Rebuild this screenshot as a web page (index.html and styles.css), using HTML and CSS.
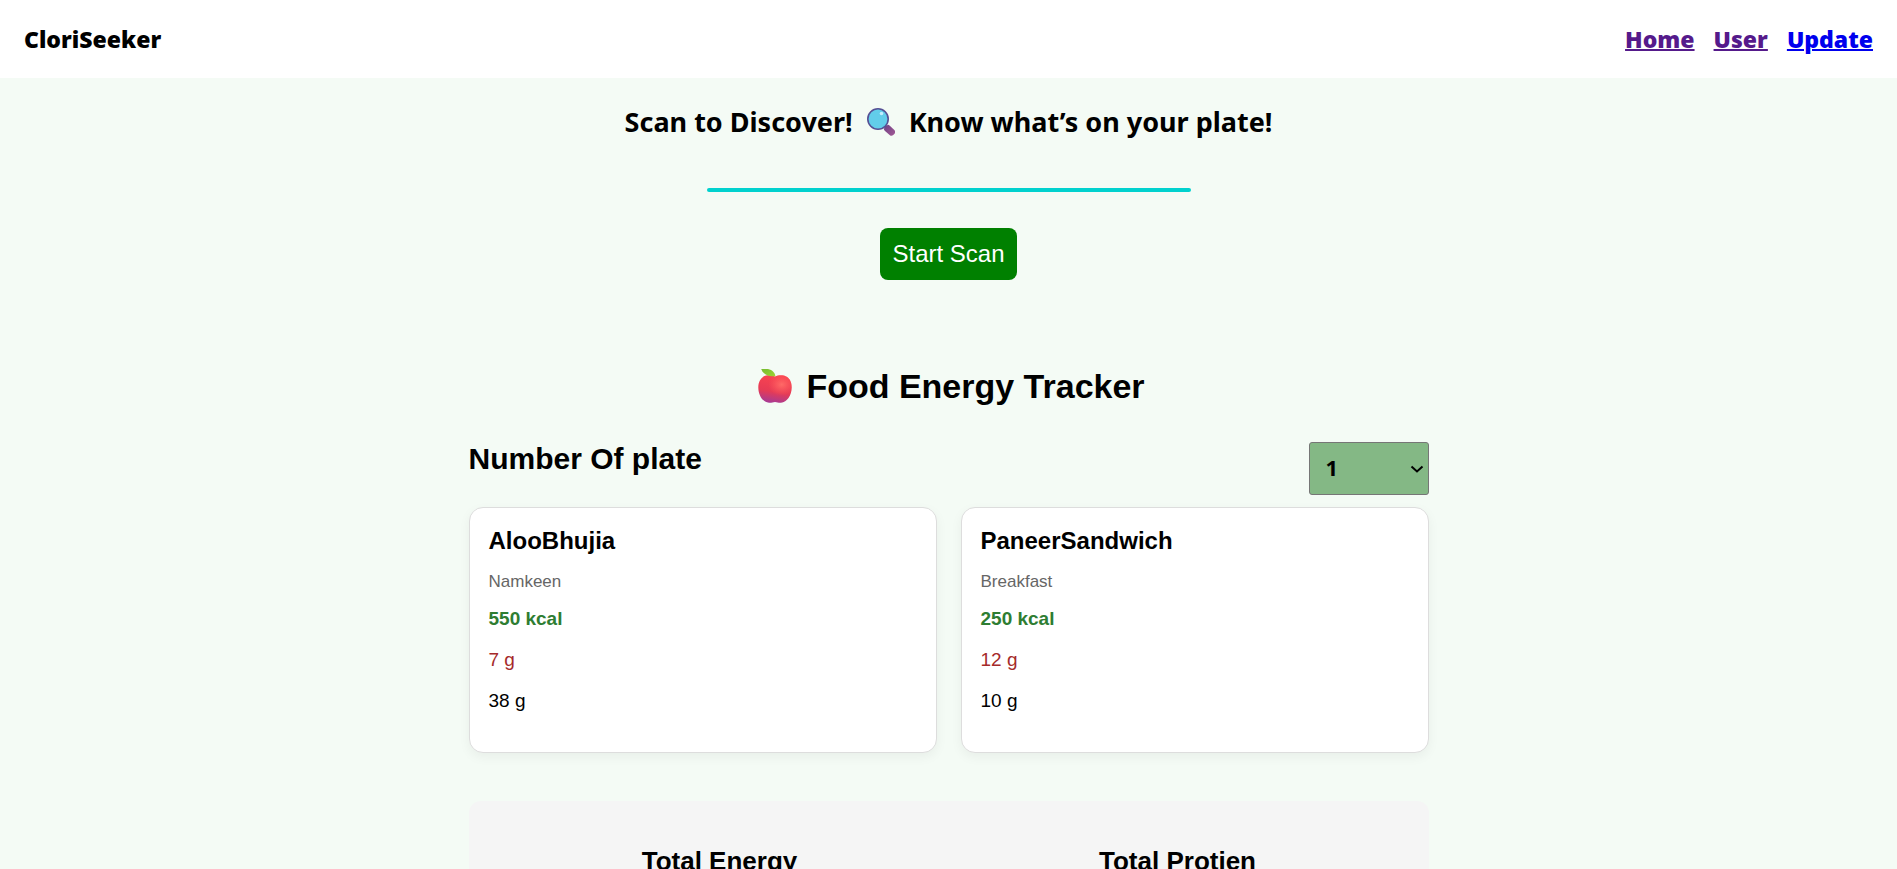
FILE: index.html
```html
<!DOCTYPE html>
<html lang="en">
<head>
<meta charset="utf-8">
<meta name="viewport" content="width=device-width, initial-scale=1">
<title>CloriSeeker</title>
<link rel="stylesheet" href="styles.css">
</head>
<body>
<header class="navbar">
  <div class="brand">CloriSeeker</div>
  <nav class="nav-links">
    <a class="visited" href="#home">Home</a>
    <a class="visited" href="#user">User</a>
    <a href="#update">Update</a>
  </nav>
</header>
<section class="scanner">
  <h2 class="scan-title">
    <span>Scan to Discover!</span>
    <svg class="lens-icon" viewBox="0 0 28 28" aria-hidden="true">
      <defs><linearGradient id="handle" x1="0" y1="0" x2="1" y2="1"><stop offset="0" stop-color="#6d4084"/><stop offset="1" stop-color="#a35a96"/></linearGradient></defs>
      <path d="M17.5 17.5L20 20" stroke="#5b5290" stroke-width="3"/>
      <path d="M17 20.500L20.500 17Q21.500 16.500 22.500 17.500L27.600 22.300Q28.800 24 27.300 26Q25.500 28.500 23.200 27.500L18 23Q16.500 21.700 17 20.500Z" fill="url(#handle)"/>
      <circle cx="11" cy="11" r="10.200" fill="#62cdea" stroke="#554f94" stroke-width="1.6"/>
      <circle cx="14.5" cy="5.5" r="1.8" fill="#c3efff"/>
    </svg>
    <span>Know what’s on your plate!</span>
  </h2>
  <div class="scan-line"></div>
  <button class="scan-button" type="button">Start Scan</button>
</section>
<main class="tracker">
  <h1 class="tracker-title">
    <svg class="apple-icon" viewBox="0 0 34 34" aria-hidden="true">
      <defs>
        <linearGradient id="skin" x1="0.6" y1="0" x2="0.4" y2="1"><stop offset="0" stop-color="#fa4450"/><stop offset="0.6" stop-color="#e63b55"/><stop offset="1" stop-color="#a83a93"/></linearGradient>
        <radialGradient id="shine" cx="0.7" cy="0.34" r="0.4"><stop offset="0" stop-color="#ff6a67"/><stop offset="1" stop-color="#ff5a5c" stop-opacity="0"/></radialGradient>
        <linearGradient id="leaf" x1="0" y1="0" x2="1" y2="1"><stop offset="0" stop-color="#74bb30"/><stop offset="1" stop-color="#a0d332"/></linearGradient>
      </defs>
      <path d="M17 7.500C19.500 6.200 23 5.700 26 6.600C31 8 33.800 12.500 33.700 18.500C33.600 27 29 33 23 33.800C20.500 34 19 33 17 33C15 33 13.500 34 11 33.800C5 33 .4 27 .3 18.500C.2 12.500 3 8 8 6.600C11 5.700 14.500 6.200 17 7.500Z" fill="url(#skin)"/>
      <path d="M17 7.500C19.500 6.200 23 5.700 26 6.600C31 8 33.800 12.500 33.700 18.500C33.600 27 29 33 23 33.800C20.500 34 19 33 17 33C15 33 13.500 34 11 33.800C5 33 .4 27 .3 18.500C.2 12.500 3 8 8 6.600C11 5.700 14.500 6.200 17 7.500Z" fill="url(#shine)"/>
      <path d="M3.200 0H10C14.500 1 17 4 17.400 7.200C11.500 7.700 5.500 6.200 3.200 0Z" fill="url(#leaf)"/>
    </svg>
    <span>Food Energy Tracker</span>
  </h1>
  <div class="plate-row">
    <label class="plate-label" for="plates">Number Of plate</label>
    <span class="plate-field">
      <select class="plate-select" id="plates">
        <option>1</option><option>2</option><option>3</option><option>4</option><option>5</option>
      </select>
      <svg class="chevron" viewBox="0 0 14 8" aria-hidden="true"><path d="M1.500 1.500L7 6.500L12.500 1.500" fill="none" stroke="#000" stroke-width="2"/></svg>
    </span>
  </div>
  <div class="cards">
    <article class="card">
      <h3 class="food-name">AlooBhujia</h3>
      <p class="food-type">Namkeen</p>
      <p class="fact energy">550 kcal</p>
      <p class="fact protein">7 g</p>
      <p class="fact">38 g</p>
    </article>
    <article class="card">
      <h3 class="food-name">PaneerSandwich</h3>
      <p class="food-type">Breakfast</p>
      <p class="fact energy">250 kcal</p>
      <p class="fact protein">12 g</p>
      <p class="fact">10 g</p>
    </article>
  </div>
  <section class="totals">
    <h3 class="total-title">Total Energy</h3>
    <h3 class="total-title">Total Protien</h3>
  </section>
</main>
</body>
</html>
```
FILE: styles.css
```css
* {
  box-sizing: border-box;
}

body {
  margin: 0;
  background: #f4fbf5;
  color: #000;
  font-family: "Liberation Sans", Arial, sans-serif;
}

h1, h2, h3, p {
  margin: 0;
}

.navbar {
  display: flex;
  align-items: center;
  justify-content: space-between;
  padding: 24px;
  background: #fff;
  font-family: "Open Sans", "Noto Sans", sans-serif;
  font-size: 23px;
  font-weight: 800;
  line-height: 30px;
}

.nav-links {
  display: flex;
  gap: 19px;
}

.nav-links a {
  color: #0000ee;
  text-decoration-thickness: 2px;
}

.nav-links .visited {
  color: #551a8b;
}

.scanner {
  display: flex;
  flex-direction: column;
  align-items: center;
  padding: 24px 24px 80px;
}

.scan-title {
  display: flex;
  align-items: center;
  gap: 14px;
  font-family: "Noto Sans", sans-serif;
  font-size: 27px;
  font-weight: 700;
  line-height: 40px;
}

.lens-icon {
  width: 28px;
  height: 28px;
}

.scan-line {
  width: 484px;
  max-width: 100%;
  height: 4px;
  margin: 46px 0 36px;
  border-radius: 2px;
  background: #00d1ce;
}

.scan-button {
  padding: 10px 12px;
  border: 0;
  border-radius: 8px;
  background: #008000;
  color: #fff;
  font-family: inherit;
  font-size: 24px;
  line-height: 32px;
}

.tracker {
  max-width: 960px;
  margin: 0 auto;
  padding-bottom: 48px;
}

.tracker-title {
  display: flex;
  align-items: center;
  justify-content: center;
  gap: 14px;
  padding-left: 6px;
  font-size: 34px;
  line-height: 52px;
}

.apple-icon {
  width: 34px;
  height: 34px;
}

.plate-row {
  display: flex;
  align-items: flex-start;
  justify-content: space-between;
  margin: 30px 0 12px;
}

.plate-label {
  font-size: 30px;
  font-weight: 700;
  line-height: 34px;
}

.plate-field {
  display: grid;
  align-items: center;
  justify-items: end;
}

.plate-select,
.chevron {
  grid-area: 1 / 1;
}

.plate-select {
  width: 120px;
  padding: 9px 16px 11px;
  appearance: none;
  border: 1px solid #767676;
  border-radius: 3px;
  background: #84b885;
  color: #000;
  font-family: "Noto Sans", sans-serif;
  font-size: 22px;
  font-weight: 700;
  line-height: 31px;
}

.chevron {
  width: 14px;
  height: 8px;
  margin-right: 5px;
  pointer-events: none;
}

.cards {
  display: grid;
  grid-template-columns: 1fr 1fr;
  gap: 24px;
}

.card {
  padding: 19px 19px 40px;
  border: 1px solid #ddd;
  border-radius: 14px;
  background: #fff;
  box-shadow: 0 4px 12px rgba(0, 0, 0, 0.05);
}

.food-name {
  margin-bottom: 17px;
  font-size: 24px;
  line-height: 28px;
}

.food-type {
  margin-bottom: 16px;
  color: #666;
  font-size: 17px;
  line-height: 20px;
}

.fact {
  margin-bottom: 19px;
  font-size: 19px;
  line-height: 22px;
}

.fact:last-child {
  margin-bottom: 0;
}

.energy {
  color: #2e7d32;
  font-weight: 700;
}

.protein {
  color: #a52a2a;
}

.totals {
  display: grid;
  grid-template-columns: 1fr 1fr;
  gap: 20px;
  margin-top: 48px;
  padding: 44px 32px;
  border-radius: 12px;
  background: #f5f5f5;
  text-align: center;
}

.total-title {
  font-size: 26px;
  line-height: 32px;
}
```
